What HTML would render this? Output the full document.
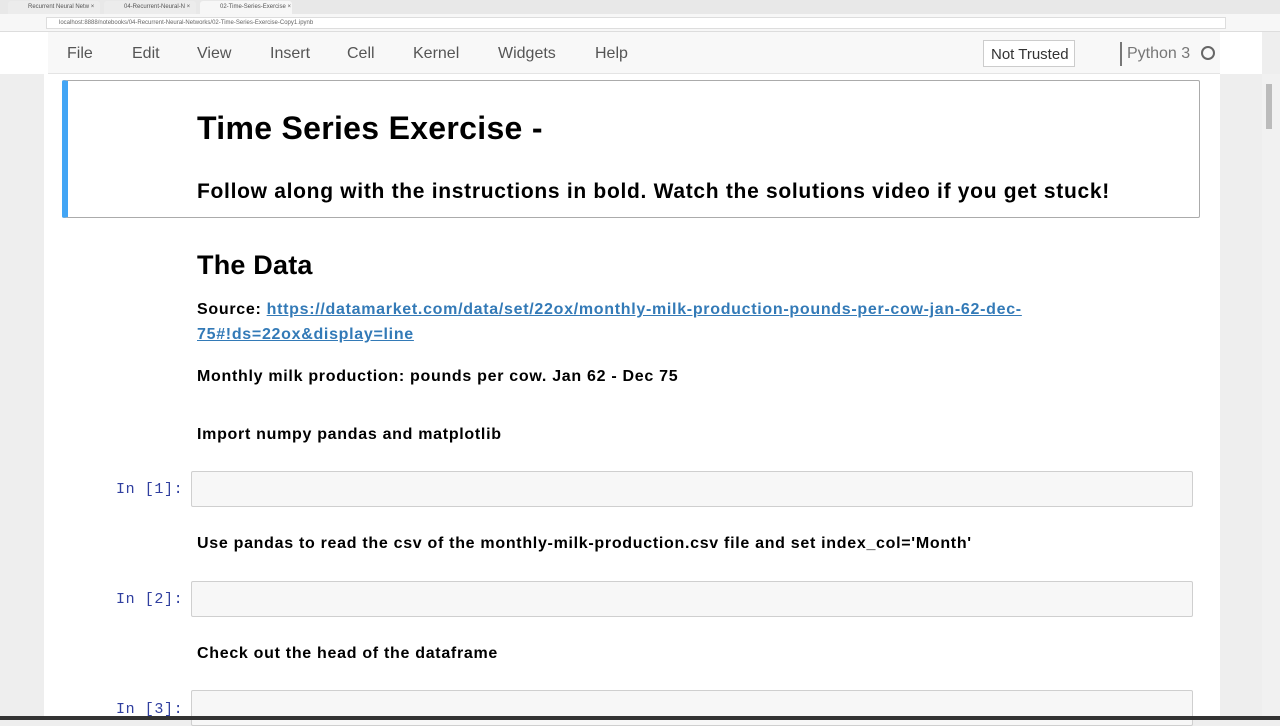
<!DOCTYPE html>
<html><head><style>
*{margin:0;padding:0;box-sizing:border-box}
body{width:1280px;height:720px;overflow:hidden;background:#eee;font-family:"Liberation Sans",sans-serif;position:relative}
.abs{position:absolute}
.tabs{left:0;top:0;width:1280px;height:14px;background:#e8e8e8}
.tab{top:1px;height:13px;font-size:6px;color:#555;padding:3px 0 0 20px;background:#ececec;border-radius:3px 3px 0 0}
.addr{left:0;top:14px;width:1280px;height:18px;background:#f7f7f7;border-bottom:1px solid #ddd}
.url{left:46px;top:17px;width:1180px;height:12px;background:#fff;border:1px solid #ddd;font-size:6px;color:#666;padding:2px 0 0 12px}
.menu{left:0;top:32px;width:1262px;height:42px;background:#fff}
.menubar{left:48px;top:32px;width:1172px;height:42px;background:#f8f8f8;border-bottom:1px solid #e4e4e4}
.mi{top:45px;font-size:16px;color:#555}
.nb{left:44px;top:74px;width:1176px;height:646px;background:#fff}
.scroll{left:1262px;top:74px;width:18px;height:646px;background:#f1f1f1}
h1,h2,p{font-weight:bold;color:#000}
p{letter-spacing:0.7px}
.in{font-family:"Liberation Mono",monospace;font-size:15px;color:#303f9f;letter-spacing:0.6px}
.box{left:191px;width:1002px;height:36px;background:#f7f7f7;border:1px solid #cfcfcf;border-radius:2px}
a{color:#337ab7;text-decoration:underline}
</style></head><body>
<div class="abs tabs"></div>
<div class="abs tab" style="left:8px;width:92px">Recurrent Neural Netw ×</div>
<div class="abs tab" style="left:104px;width:92px">04-Recurrent-Neural-N ×</div>
<div class="abs tab" style="left:200px;width:92px;background:#f7f7f7">02-Time-Series-Exercise ×</div>
<div class="abs addr"></div>
<div class="abs url">localhost:8888/notebooks/04-Recurrent-Neural-Networks/02-Time-Series-Exercise-Copy1.ipynb</div>
<div class="abs menu"></div>
<div class="abs menubar"></div>
<div class="abs mi" style="left:67px">File</div>
<div class="abs mi" style="left:132px">Edit</div>
<div class="abs mi" style="left:197px">View</div>
<div class="abs mi" style="left:270px">Insert</div>
<div class="abs mi" style="left:347px">Cell</div>
<div class="abs mi" style="left:413px">Kernel</div>
<div class="abs mi" style="left:498px">Widgets</div>
<div class="abs mi" style="left:595px">Help</div>
<div class="abs" style="left:983px;top:40px;width:92px;height:27px;border:1px solid #ccc;background:#fff;font-size:15px;color:#333;padding:5px 0 0 7px">Not Trusted</div>
<div class="abs" style="left:1120px;top:42px;width:2px;height:24px;background:#777"></div>
<div class="abs mi" style="left:1127px;color:#777">Python 3</div>
<div class="abs" style="left:1201px;top:46px;width:14px;height:14px;border:2px solid #666;border-radius:50%"></div>
<div class="abs nb"></div>
<div class="abs scroll"><div style="position:absolute;left:4px;top:10px;width:6px;height:45px;background:#bbb"></div></div>
<div class="abs" style="left:62px;top:80px;width:1138px;height:138px;border:1px solid #ababab;border-left:6px solid #42a5f5;border-radius:2px"></div>
<h1 class="abs" style="left:197px;top:110px;font-size:32px;letter-spacing:0.3px">Time Series Exercise -</h1>
<p class="abs" style="left:197px;top:180px;font-size:21px">Follow along with the instructions in bold. Watch the solutions video if you get stuck!</p>
<h2 class="abs" style="left:197px;top:250px;font-size:27px;letter-spacing:0.2px">The Data</h2>
<p class="abs" style="left:197px;top:297px;font-size:16px;line-height:25px;width:850px">Source: <a>https://datamarket.com/data/set/22ox/monthly-milk-production-pounds-per-cow-jan-62-dec-75#!ds=22ox&amp;display=line</a></p>
<p class="abs" style="left:197px;top:368px;font-size:16px">Monthly milk production: pounds per cow. Jan 62 - Dec 75</p>
<p class="abs" style="left:197px;top:426px;font-size:16px">Import numpy pandas and matplotlib</p>
<div class="abs in" style="left:116px;top:481px">In [1]:</div>
<div class="abs box" style="top:471px"></div>
<p class="abs" style="left:197px;top:535px;font-size:16px">Use pandas to read the csv of the monthly-milk-production.csv file and set index_col='Month'</p>
<div class="abs in" style="left:116px;top:591px">In [2]:</div>
<div class="abs box" style="top:581px"></div>
<p class="abs" style="left:197px;top:645px;font-size:16px">Check out the head of the dataframe</p>
<div class="abs in" style="left:116px;top:701px">In [3]:</div>
<div class="abs box" style="top:690px"></div>
<div class="abs" style="left:0;top:716px;width:1280px;height:4px;background:#333"></div>
</body></html>
